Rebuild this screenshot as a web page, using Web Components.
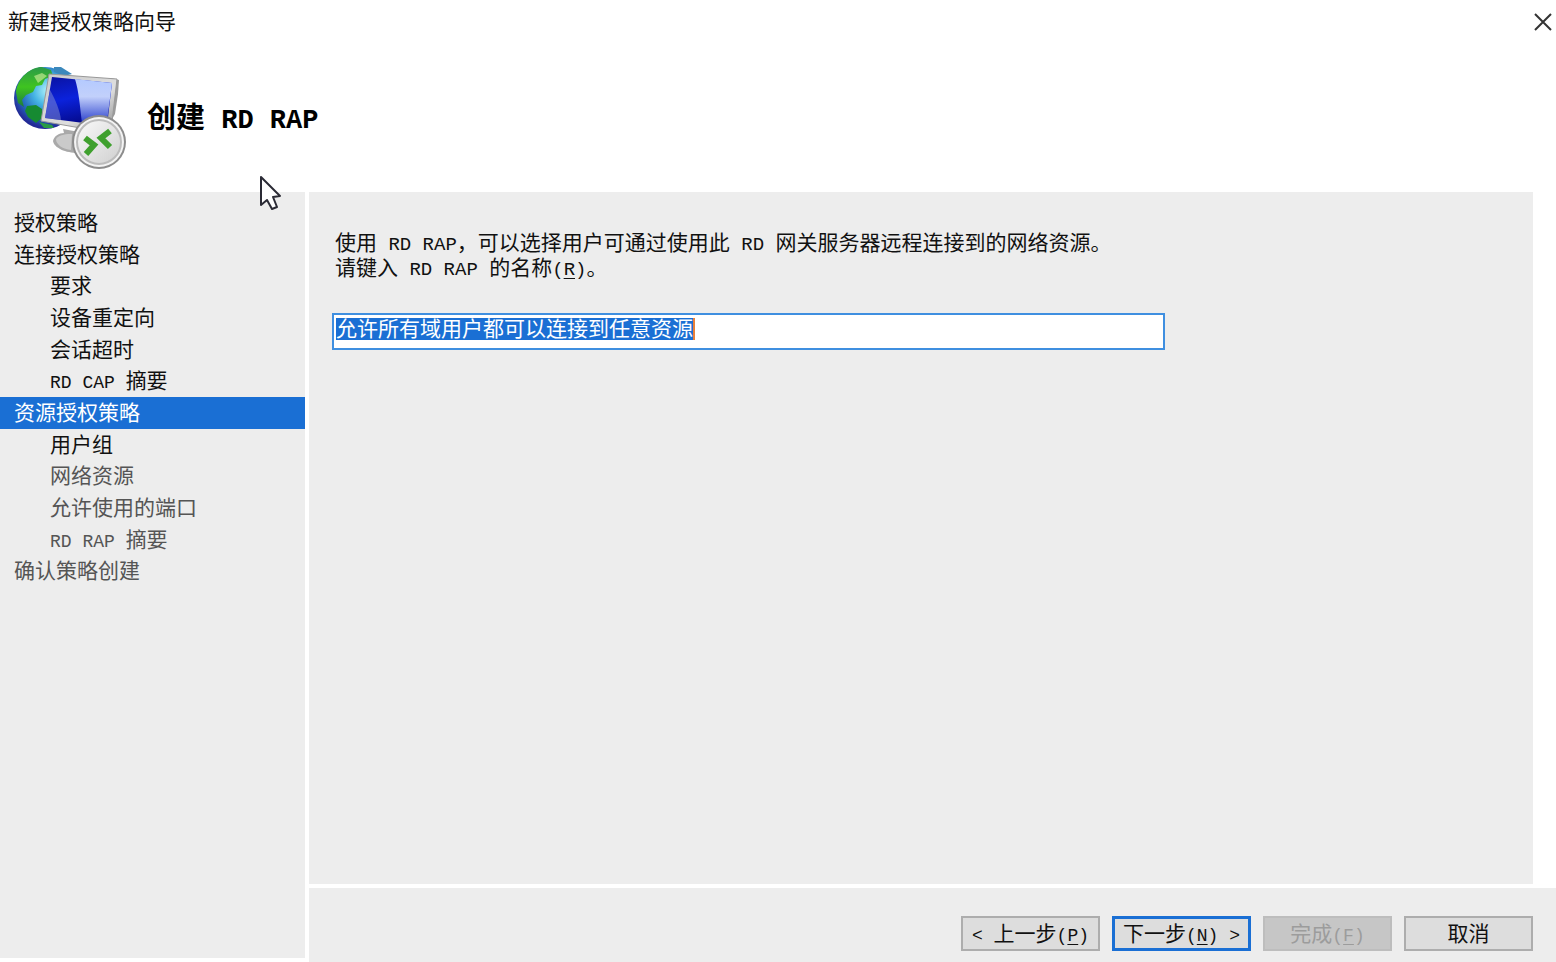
<!DOCTYPE html>
<html lang="zh-CN">
<head>
<meta charset="utf-8">
<title>新建授权策略向导</title>
<style>
body {
    margin: 0;
    background: #fff;
    color: #111;
    font-family: "Liberation Sans", "Noto Sans CJK SC", sans-serif;
    font-size: 21px;
    line-height: 24px;
}
</style>
</head>
<body>
<wizard-window>
    <wizard-title slot="title" text="新建授权策略向导"></wizard-title>
    <wizard-header slot="header" text="创建 RD RAP"></wizard-header>
    <wizard-steps slot="steps"></wizard-steps>
    <wizard-field slot="page"
        hint="使用 RD RAP，可以选择用户可通过使用此 RD 网关服务器远程连接到的网络资源。"
        label="请键入 RD RAP 的名称(&amp;R)。"
        value="允许所有域用户都可以连接到任意资源"></wizard-field>
    <wizard-button slot="buttons" class="wide" text="&lt; 上一步(&amp;P)"></wizard-button>
    <wizard-button slot="buttons" class="wide" text="下一步(&amp;N) &gt;" primary></wizard-button>
    <wizard-button slot="buttons" text="完成(&amp;F)" disabled></wizard-button>
    <wizard-button slot="buttons" text="取消"></wizard-button>
</wizard-window>
<mouse-pointer></mouse-pointer>

<script>
// half-width runs get the mono face, "&X" marks an access key
const format = (text) =>
    text.replace(/[\x20-\x7e]+/g, (run) => {
        const html = run
            .replace(/</g, '&lt;')
            .replace(/>/g, '&gt;')
            .replace(/&([A-Z])/g, '<u>$1</u>');
        return `<span class="half">${html}</span>`;
    });

const base = `
* {
    margin: 0;
    padding: 0;
    box-sizing: border-box;
}
:host {
    box-sizing: border-box;
}
.half {
    font-family: "Liberation Mono", monospace;
    font-size: 18px;
    line-height: 1;
    white-space: pre;
}
u {
    text-underline-offset: 3px;
}
`;

class WizardWindow extends HTMLElement {
    constructor() {
        super();
        this.attachShadow({ mode: 'open' }).innerHTML = `
        <style>
            ${base}
            :host {
                display: flex;
                flex-direction: column;
                min-height: 100vh;
            }
            .body {
                flex: 1;
                display: grid;
                grid-template-columns: 305px 1fr;
                gap: 4px;
            }
            .side {
                background: #ededed;
                margin-bottom: 4px;
                padding-top: 15px;
            }
            .right {
                display: flex;
                flex-direction: column;
                gap: 4px;
            }
            .page {
                flex: 1;
                background: #ededed;
                margin-right: 23px;
                padding: 38px 26px;
            }
            .buttons {
                background: #ededed;
                display: flex;
                justify-content: flex-end;
                gap: 12px;
                padding: 28px 23px 11px;
            }
        </style>
        <slot name="title"></slot>
        <slot name="header"></slot>
        <div class="body">
            <nav class="side"><slot name="steps"></slot></nav>
            <div class="right">
                <main class="page"><slot name="page"></slot></main>
                <footer class="buttons"><slot name="buttons"></slot></footer>
            </div>
        </div>
        `;
    }
}

class WizardTitle extends HTMLElement {
    connectedCallback() {
        this.attachShadow({ mode: 'open' }).innerHTML = `
        <style>
            ${base}
            :host {
                display: flex;
                justify-content: space-between;
                align-items: center;
                height: 44px;
                padding-left: 8px;
            }
            button {
                width: 26px;
                height: 44px;
                border: none;
                background: none;
            }
            svg {
                display: block;
                margin-left: 3px;
            }
        </style>
        <span>${format(this.getAttribute('text'))}</span>
        <button type="button" aria-label="关闭">
            <svg width="20" height="20" viewBox="0 0 20 20">
                <path d="M2 2L18 18M18 2L2 18" stroke="#333" stroke-width="2" fill="none"/>
            </svg>
        </button>
        `;
    }
}

class WizardHeader extends HTMLElement {
    connectedCallback() {
        this.attachShadow({ mode: 'open' }).innerHTML = `
        <style>
            ${base}
            :host {
                display: flex;
                align-items: center;
                gap: 19px;
                height: 148px;
                padding-left: 12px;
            }
            h1 {
                font-size: 29px;
                line-height: 40px;
                font-weight: bold;
                color: #000;
            }
            .half {
                font-size: 27px;
            }
        </style>
        <svg width="116" height="106" viewBox="12 65 116 106">
            <defs>
                <radialGradient id="globe" cx="0.55" cy="0.38" r="0.6">
                    <stop offset="0" stop-color="#b4f4fc"/>
                    <stop offset="0.4" stop-color="#45b4e4"/>
                    <stop offset="0.75" stop-color="#2468bc"/>
                    <stop offset="1" stop-color="#232a96"/>
                </radialGradient>
                <linearGradient id="land" x1="0" y1="0" x2="0" y2="1">
                    <stop offset="0" stop-color="#2c9a48"/>
                    <stop offset="0.5" stop-color="#3fc420"/>
                    <stop offset="1" stop-color="#1c7a3c"/>
                </linearGradient>
                <linearGradient id="screen" x1="0" y1="0" x2="0.3" y2="1">
                    <stop offset="0" stop-color="#0a12a0"/>
                    <stop offset="0.5" stop-color="#0b22dc"/>
                    <stop offset="1" stop-color="#050a8c"/>
                </linearGradient>
                <linearGradient id="shine" x1="0" y1="0" x2="0" y2="1">
                    <stop offset="0" stop-color="#b4caff"/>
                    <stop offset="0.4" stop-color="#c2d0fb"/>
                    <stop offset="1" stop-color="#2b40cc"/>
                </linearGradient>
                <linearGradient id="frame" x1="0" y1="0" x2="1" y2="1">
                    <stop offset="0" stop-color="#c9c9c9"/>
                    <stop offset="0.6" stop-color="#dedede"/>
                    <stop offset="1" stop-color="#8c8c8c"/>
                </linearGradient>
                <linearGradient id="disc" x1="0" y1="0" x2="1" y2="1">
                    <stop offset="0" stop-color="#fafafa"/>
                    <stop offset="1" stop-color="#cfcfcf"/>
                </linearGradient>
            </defs>
            <circle cx="45" cy="98" r="31" fill="url(#globe)"/>
            <path d="M16 92C18 77 31 67 42 67L51 70L53 76L45 79L42 85L36 86L33 92L26 95L22 100L24 107L18 103Z" fill="url(#land)"/>
            <path d="M34 76L42 73L47 76L38 83Z" fill="#d9f1a0" opacity="0.6"/>
            <path d="M27 106L36 105L42 109L42 118L36 123L28 117L25 111Z" fill="#168a32"/>
            <path d="M39 122L52 125L54 128L44 128Z" fill="#2a9a44"/>
            <path d="M54 67L61 67L72 74L64 76L54 72Z" fill="#3b88bc"/>
            <path d="M63 129L79 132L78 153C66 153 54 148 53 141C54 136 59 133 64 133Z" fill="#a9a9a9"/>
            <path d="M56 139C60 134 67 134 72 134L71 150C63 149 56 145 56 139Z" fill="#cacaca"/>
            <path d="M111 78L119 80L118 94L115 114L108 126Z" fill="#9c9c9c"/>
            <path d="M49 74L117 79L112 122L103 132L41 121Z" fill="url(#frame)" stroke="#999" stroke-width="1"/>
            <path d="M52 77L112 83L107 126L45 118Z" fill="url(#screen)"/>
            <path d="M75 79L112 83L107 122L82 123C80 107 79 92 75 79Z" fill="url(#shine)"/>
            <path d="M50 90C56 101 60 111 61 120L45 118Z" fill="#7b86d2" opacity="0.55"/>
            <circle cx="99" cy="142" r="27" fill="#8c8c8c"/>
            <circle cx="99" cy="142" r="25" fill="#f4f4f4"/>
            <circle cx="99" cy="142" r="22" fill="url(#disc)" stroke="#bcbcbc" stroke-width="2"/>
            <path d="M85 138L94 145L86 154" fill="none" stroke="#3fa02e" stroke-width="6"/>
            <path d="M110 131L101 138L110 147" fill="none" stroke="#3fa02e" stroke-width="6"/>
        </svg>
        <h1>${format(this.getAttribute('text'))}</h1>
        `;
    }
}

const steps = [
    { text: '授权策略' },
    { text: '连接授权策略' },
    { text: '要求', cls: 'sub' },
    { text: '设备重定向', cls: 'sub' },
    { text: '会话超时', cls: 'sub' },
    { text: 'RD CAP 摘要', cls: 'sub' },
    { text: '资源授权策略', cls: 'current' },
    { text: '用户组', cls: 'sub' },
    { text: '网络资源', cls: 'sub off' },
    { text: '允许使用的端口', cls: 'sub off' },
    { text: 'RD RAP 摘要', cls: 'sub off' },
    { text: '确认策略创建', cls: 'off' },
];

class WizardSteps extends HTMLElement {
    connectedCallback() {
        const items = steps.map(
            (s) => `<li class="${s.cls || ''}">${format(s.text)}</li>`
        );
        this.attachShadow({ mode: 'open' }).innerHTML = `
        <style>
            ${base}
            :host {
                display: block;
            }
            ol {
                display: grid;
                grid-template-rows: repeat(12, 1fr);
                height: 380px;
                list-style: none;
            }
            li {
                padding-left: 14px;
                line-height: 31px;
            }
            .sub {
                padding-left: 50px;
            }
            .off {
                color: #555;
            }
            .current {
                background: #1a6fd4;
                color: #fff;
            }
        </style>
        <ol>${items.join('')}</ol>
        `;
    }
}

class WizardField extends HTMLElement {
    connectedCallback() {
        this.attachShadow({ mode: 'open' }).innerHTML = `
        <style>
            ${base}
            :host {
                display: block;
            }
            .half {
                font-size: 19px;
            }
            p, label {
                display: block;
                line-height: 25px;
            }
            .box {
                position: relative;
                max-width: 833px;
                margin: 33px 0 0 -3px;
                border: 2px solid #3f8fe0;
                background: #fff;
                padding: 3px 2px 8px;
            }
            input {
                display: block;
                width: 100%;
                height: 22px;
                border: none;
                outline: none;
                background: none;
                color: #111;
                font: inherit;
                line-height: 22px;
                overflow: hidden;
            }
            input::selection {
                background: #1a6fd4;
                color: #fff;
            }
            /* caret after the 17 selected characters */
            .caret {
                position: absolute;
                left: 359px;
                top: 3px;
                width: 2px;
                height: 22px;
                background: #e8803a;
            }
        </style>
        <p>${format(this.getAttribute('hint'))}</p>
        <label for="name">${format(this.getAttribute('label'))}</label>
        <div class="box">
            <input id="name" type="text" value="${this.getAttribute('value')}">
            <i class="caret"></i>
        </div>
        `;
        const input = this.shadowRoot.querySelector('input');
        input.focus();
        input.select();
    }
}

class WizardButton extends HTMLElement {
    connectedCallback() {
        const primary = this.hasAttribute('primary') ? 'class="primary"' : '';
        const disabled = this.hasAttribute('disabled') ? 'disabled' : '';
        this.attachShadow({ mode: 'open' }).innerHTML = `
        <style>
            ${base}
            :host {
                display: block;
                width: 129px;
            }
            :host(.wide) {
                width: 139px;
            }
            button {
                display: block;
                width: 100%;
                height: 35px;
                border: 2px solid #adadad;
                background: #dddddd;
                color: #111;
                font: inherit;
                white-space: nowrap;
            }
            .primary {
                border: 3px solid #1a6fd4;
            }
            button:disabled {
                border-color: #bdbdbd;
                background: #c6c6c6;
                color: #9c9c9c;
            }
        </style>
        <button type="button" ${primary} ${disabled}>${format(this.getAttribute('text'))}</button>
        `;
    }
}

class MousePointer extends HTMLElement {
    constructor() {
        super();
        this.attachShadow({ mode: 'open' }).innerHTML = `
        <style>
            :host {
                position: absolute;
                left: 259px;
                top: 174px;
                pointer-events: none;
            }
            svg {
                display: block;
            }
        </style>
        <svg width="24" height="38" viewBox="0 0 24 38">
            <path d="M2 3V31L8 26L13 35L18 33L14 23L21 22Z" fill="#fff" stroke="#2b2b35" stroke-width="2" stroke-linejoin="round"/>
        </svg>
        `;
    }
}

window.customElements.define('wizard-window', WizardWindow);
window.customElements.define('wizard-title', WizardTitle);
window.customElements.define('wizard-header', WizardHeader);
window.customElements.define('wizard-steps', WizardSteps);
window.customElements.define('wizard-field', WizardField);
window.customElements.define('wizard-button', WizardButton);
window.customElements.define('mouse-pointer', MousePointer);
</script>
</body>
</html>
